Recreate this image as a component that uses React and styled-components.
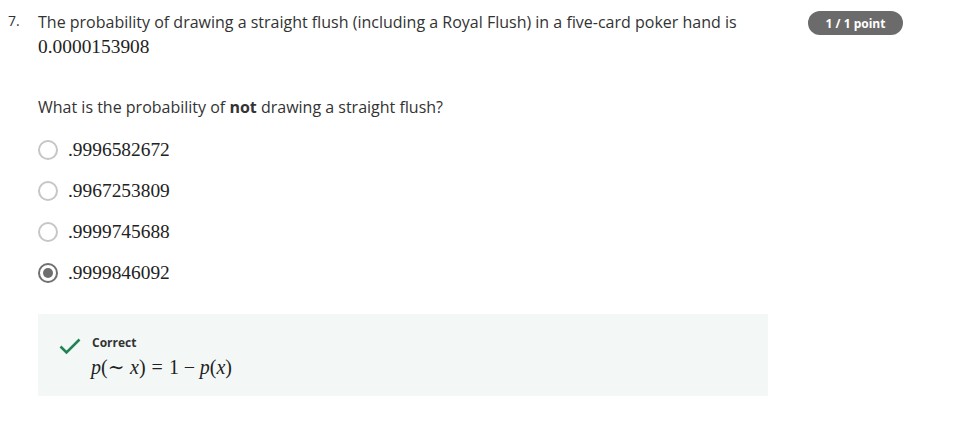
import React from 'react';
import styled, { createGlobalStyle } from 'styled-components';

const GlobalStyle = createGlobalStyle`
    body {
        margin: 0;
        background: #ffffff;
        font-family: "Open Sans", "Liberation Sans", sans-serif;
        color: #333333;
    }
`

const options = [
    { value: '.9996582672', checked: false },
    { value: '.9967253809', checked: false },
    { value: '.9999745688', checked: false },
    { value: '.9999846092', checked: true },
];

const App = () => {
    return (
        <>
            <GlobalStyle />
            <QuestionRow>
                <QuestionNumber>7.</QuestionNumber>
                <QuestionBody>
                    <Prompt>
                        The probability of drawing a straight flush (including a Royal Flush) in a five-card poker hand is{' '}
                        <MathText>0.0000153908</MathText>
                    </Prompt>
                    <SubPrompt>
                        What is the probability of <strong>not</strong> drawing a straight flush?
                    </SubPrompt>
                    <OptionList>
                        {options.map((opt) => (
                            <OptionItem key={opt.value}>
                                <Radio $checked={opt.checked} />
                                <MathText>{opt.value}</MathText>
                            </OptionItem>
                        ))}
                    </OptionList>
                    <Feedback>
                        <CheckIcon viewBox="0 0 24 24">
                            <path d="M2.5 12.5 L8.5 18.5 L21.5 5.5" fill="none" stroke="#1f8354" strokeWidth="2.6" />
                        </CheckIcon>
                        <FeedbackText>
                            <FeedbackTitle>Correct</FeedbackTitle>
                            <Formula>
                                <i>p</i>(<Op $l={0} $r={0.28}>∼</Op><i>x</i>)
                                <Op $l={0.3} $r={0.3}>=</Op>1
                                <Op $l={0.24} $r={0.24}>−</Op>
                                <i>p</i>(<i>x</i>)
                            </Formula>
                        </FeedbackText>
                    </Feedback>
                </QuestionBody>
                <PointBadge>1 / 1 point</PointBadge>
            </QuestionRow>
        </>
    );
};

export default App;

const QuestionRow = styled.div`
    display: flex;
    align-items: flex-start;
    padding: 10px 0 0 8px;
`

const QuestionNumber = styled.div`
    width: 30px;
    font-size: 14px;
    line-height: 24px;
    margin-top: -1px;
`

const QuestionBody = styled.div`
    width: 730px;
    display: flex;
    flex-direction: column;
`

const Prompt = styled.p`
    margin: 0;
    font-size: 16px;
    line-height: 25px;
`

const MathText = styled.span`
    font-family: "Liberation Serif", "DejaVu Serif", serif;
    font-size: 19.4px;
    line-height: 24px;
    color: #222222;
`

const SubPrompt = styled.p`
    margin: 35px 0 0;
    font-size: 16px;
    line-height: 24px;

    strong {
        font-weight: 700;
    }
`

const OptionList = styled.div`
    display: flex;
    flex-direction: column;
    gap: 17px;
    margin-top: 19px;
`

const OptionItem = styled.label`
    display: flex;
    align-items: center;
    gap: 10px;
    height: 24px;
`

const Radio = styled.span`
    width: 16px;
    height: 16px;
    border-radius: 50%;
    border: 2px solid ${(p) => (p.$checked ? '#707070' : '#c6c6c6')};
    display: flex;
    align-items: center;
    justify-content: center;
    flex-shrink: 0;

    &::after {
        content: '';
        display: ${(p) => (p.$checked ? 'block' : 'none')};
        width: 10px;
        height: 10px;
        border-radius: 50%;
        background: #6e6e6e;
    }
`

const Feedback = styled.div`
    margin-top: 29px;
    height: 82px;
    background: #f3f8f7;
    display: flex;
    align-items: flex-start;
    padding: 19px 0 0 20px;
    box-sizing: border-box;
`

const CheckIcon = styled.svg`
    width: 24px;
    height: 24px;
    margin-top: 1px;
`

const FeedbackText = styled.div`
    margin-left: 10px;
    display: flex;
    flex-direction: column;
`

const FeedbackTitle = styled.div`
    font-size: 12px;
    font-weight: 700;
    line-height: 20px;
    color: #333333;
`

const Formula = styled.div`
    font-family: "Liberation Serif", "DejaVu Serif", serif;
    font-size: 20px;
    line-height: 28px;
    color: #222222;
    margin-left: -1px;
    white-space: nowrap;
`

const Op = styled.span`
    margin: 0 ${(p) => p.$r}em 0 ${(p) => p.$l}em;
`

const PointBadge = styled.div`
    margin: 1px 0 0 40px;
    width: 95px;
    height: 24px;
    border-radius: 12px;
    background: #6b6b6b;
    color: #ffffff;
    font-size: 12px;
    font-weight: 700;
    display: flex;
    align-items: center;
    justify-content: center;
`
